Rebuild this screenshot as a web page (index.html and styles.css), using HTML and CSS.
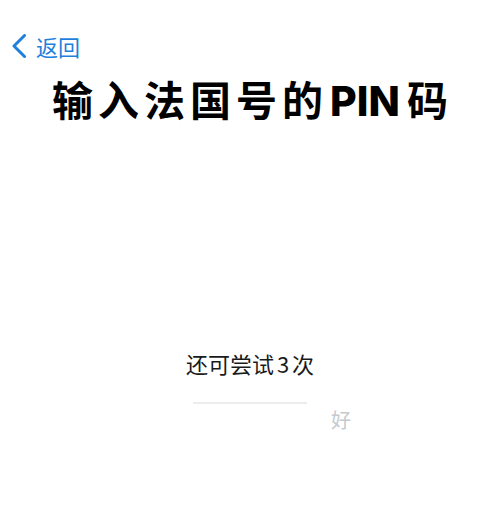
FILE: index.html
```html
<!DOCTYPE html>
<html>
<head>
<meta charset="utf-8">
<link rel="stylesheet" href="styles.css">
</head>
<body>
<div class="page">
  <div class="nav">
    <svg class="chev" width="16" height="24" viewBox="0 0 16 24"><path d="M13.5 1.5 L3 12 L13.5 22.5" fill="none" stroke="#1e7fdc" stroke-width="3" stroke-linecap="round" stroke-linejoin="round"/></svg>
    <span class="back">返回</span>
  </div>
  <h1 class="title">输入法国号的<span class="latin">PIN</span>码</h1>
  <div class="tries">还可尝试<span class="num">3</span>次</div>
  <div class="entry">
    <div class="line"></div>
    <span class="ok">好</span>
  </div>
</div>
</body>
</html>
```
FILE: styles.css
```css
html, body { margin: 0; padding: 0; background: #fff; }
body { font-family: "Noto Sans CJK SC", "Noto Sans", sans-serif; width: 500px; height: 522px; overflow: hidden; }
.page { display: flex; flex-direction: column; }
.nav { display: flex; align-items: center; padding: 34px 0 0 11px; height: 24px; gap: 9px; }
.chev { display: block; }
.back { color: #1e7fdc; font-size: 22px; line-height: 24px; }
.title { margin: 15px 0 0 0; padding-left: 5px; text-align: center; font-size: 41px; font-weight: 700; line-height: 50px; color: #000; letter-spacing: 5px; }
.latin { font-family: "Inter", "Noto Sans", sans-serif; font-weight: 800; letter-spacing: 0; margin: 0 7px 0 2px; }
.tries { margin-top: 222px; text-align: center; font-size: 22px; line-height: 30px; color: #1a1a1a; letter-spacing: 0; }
.num { margin: 0 3px; }
.entry { position: relative; margin: 24px auto 0; width: 114px; height: 30px; }
.line { height: 2px; background: #ececec; }
.ok { position: absolute; left: 138px; top: 6px; font-size: 20px; line-height: 24px; color: #c6cace; }
```
